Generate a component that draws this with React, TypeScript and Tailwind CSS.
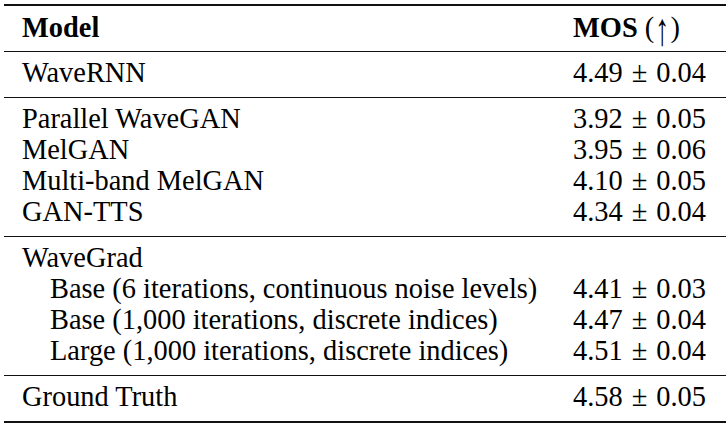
import React from "react";

const serif = { fontFamily: '"Liberation Serif", "Times New Roman", serif' };

function Score({ v }: { v: string }) {
  const [a, b] = v.split("|");
  return (
    <span className="whitespace-nowrap">
      {a}
      <span className="mx-[9px]">±</span>
      {b}
    </span>
  );
}

type Row = { name: string; score?: string; indent?: boolean };

const groups: Row[][] = [
  [{ name: "WaveRNN", score: "4.49|0.04" }],
  [
    { name: "Parallel WaveGAN", score: "3.92|0.05" },
    { name: "MelGAN", score: "3.95|0.06" },
    { name: "Multi-band MelGAN", score: "4.10|0.05" },
    { name: "GAN-TTS", score: "4.34|0.04" },
  ],
  [
    { name: "WaveGrad" },
    { name: "Base (6 iterations, continuous noise levels)", score: "4.41|0.03", indent: true },
    { name: "Base (1,000 iterations, discrete indices)", score: "4.47|0.04", indent: true },
    { name: "Large (1,000 iterations, discrete indices)", score: "4.51|0.04", indent: true },
  ],
  [{ name: "Ground Truth", score: "4.58|0.05" }],
];

export default function App() {
  return (
    <div className="w-[727px] h-[432px] bg-white text-black pt-[4px] pl-[4px] pr-[1px]" style={serif}>
      <div className="border-t-[2.5px] border-b-[2.5px] border-[#111] text-[28.4px] leading-[31px]">
        <div className="flex pt-[6px] pb-[8px] border-b-[1.3px] border-[#111] font-bold">
          <div className="pl-[18px] w-[569px]">Model</div>
          <div className="whitespace-nowrap">
            MOS{" "}
            <span className="font-normal text-black">
              (<span className="inline-block scale-y-[1.6] translate-y-[2px] px-[1px] text-black">↑</span>)
            </span>
          </div>
        </div>
        {groups.map((g, gi) => (
          <div
            key={gi}
            className={
              "pt-[5px] pb-[9px] " +
              (gi < groups.length - 1 ? "border-b-[1.3px] border-[#111]" : "")
            }
          >
            {g.map((r, ri) => (
              <div key={ri} className="flex h-[31px]">
                <div className={"w-[569px] whitespace-nowrap " + (r.indent ? "pl-[46px]" : "pl-[18px]")}>
                  {r.name}
                </div>
                <div>{r.score ? <Score v={r.score} /> : null}</div>
              </div>
            ))}
          </div>
        ))}
      </div>
    </div>
  );
}
